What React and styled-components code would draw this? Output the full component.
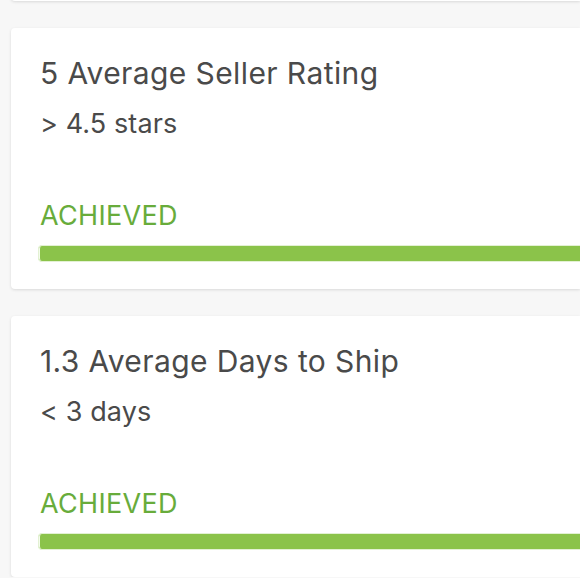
import React from 'react';
import styled, { createGlobalStyle } from 'styled-components';

const GlobalStyle = createGlobalStyle`
    html, body {
        margin: 0;
        padding: 0;
        background-color: #f7f7f7;
        font-family: 'Inter', 'Open Sans', sans-serif;
        overflow: hidden;
    }
`;

const Page = styled.div`
    display: flex;
    flex-direction: column;
    gap: 27px;
    padding-left: 11px;
    margin-top: -260px;
`;

const Card = styled.div`
    background-color: #ffffff;
    border-radius: 4px 0 0 4px;
    box-shadow: 0 1px 3px rgba(0, 0, 0, 0.12);
    height: 261px;
    padding: 0 0 0 29px;
    box-sizing: border-box;
    display: flex;
    flex-direction: column;
`;

const Title = styled.div`
    margin-top: 27px;
    font-size: 30px;
    line-height: 36px;
    letter-spacing: 0.4px;
    color: #4a4a4a;
`;

const Target = styled.div`
    margin-top: 18px;
    font-size: 27px;
    line-height: 30px;
    letter-spacing: 0.1px;
    color: #4a4a4a;
`;

const Status = styled.div`
    margin-top: 62px;
    font-size: 27px;
    line-height: 30px;
    letter-spacing: 0.3px;
    color: #68ac3b;
`;

const Track = styled.div`
    margin-top: 14px;
    margin-left: -2px;
    height: 17px;
    background-color: #8bc34a;
    border-radius: 4px 0 0 4px;
    border: 1px solid #e3f1d3;
    border-right: none;
    box-sizing: border-box;
`;

const Fill = styled.div`
    height: 100%;
    border-radius: 3px 0 0 3px;
    border-left: 1px solid #f4fbec;
    background-color: #8bc34a;
    box-sizing: border-box;
`;

const goals = [
    { title: '5 Average Seller Rating', target: '> 4.5 stars' },
    { title: '1.3 Average Days to Ship', target: '< 3 days' },
];

function App() {
    return (
        <>
            <GlobalStyle />
            <Page>
                <Card />
                {goals.map((goal) => (
                    <Card key={goal.title}>
                        <Title>{goal.title}</Title>
                        <Target>{goal.target}</Target>
                        <Status>ACHIEVED</Status>
                        <Track>
                            <Fill style={{ width: '100%' }} />
                        </Track>
                    </Card>
                ))}
            </Page>
        </>
    );
}

export default App;
